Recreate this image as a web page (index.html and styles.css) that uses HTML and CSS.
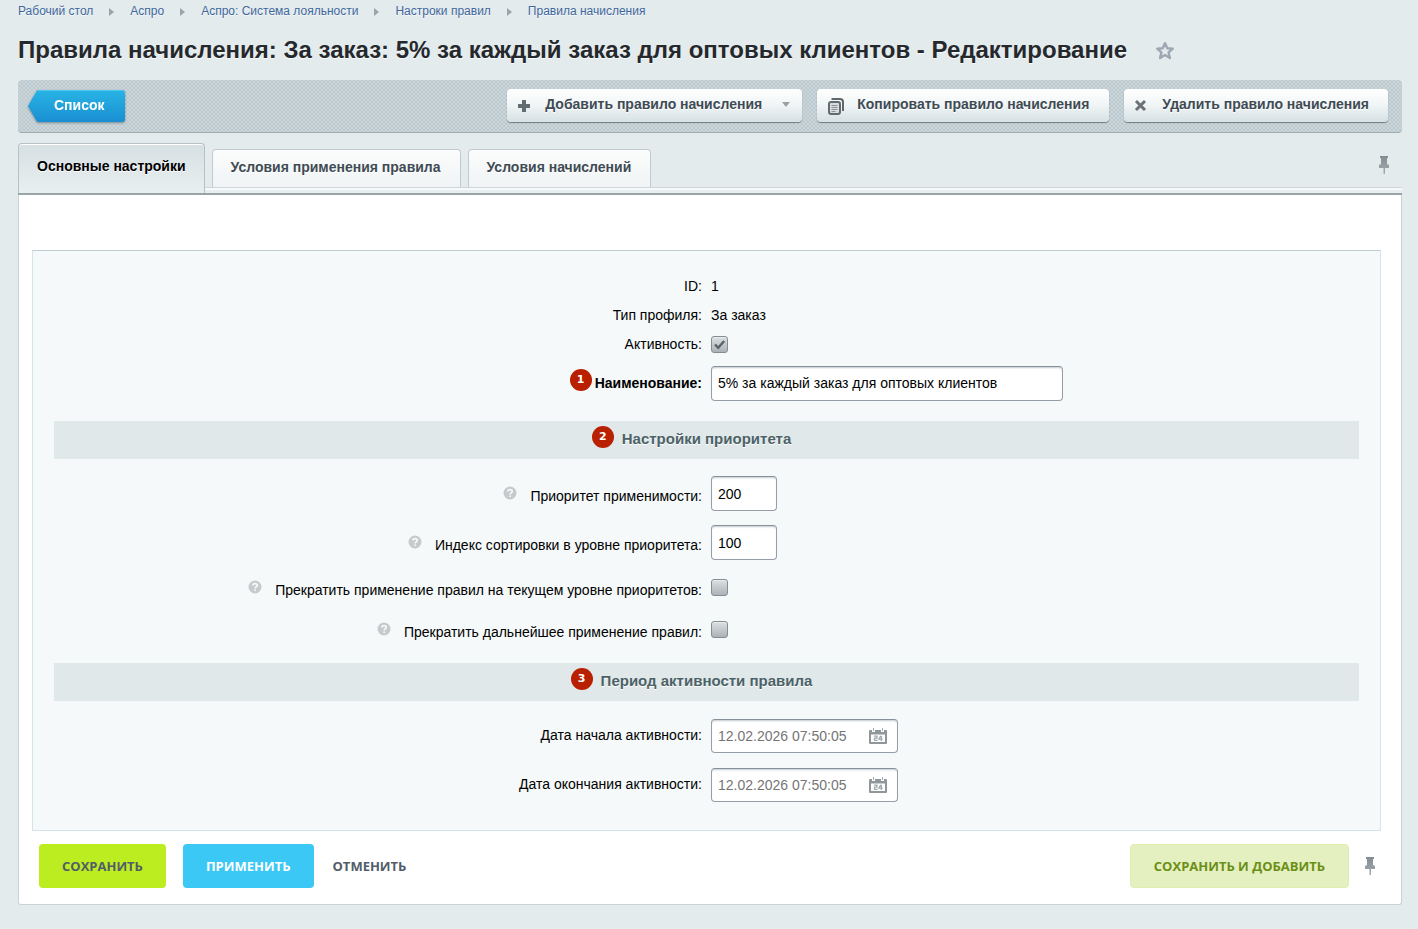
FILE: index.html
```html
<!DOCTYPE html>
<html lang="ru">
<head>
<meta charset="utf-8">
<title>Правила начисления - Редактирование</title>
<link rel="stylesheet" href="styles.css">
</head>
<body>
<svg class="sprite" aria-hidden="true">
  <defs>
    <linearGradient id="metal" x1="0" y1="0" x2="0" y2="1">
      <stop offset="0" stop-color="#838d91"/><stop offset="1" stop-color="#a3abaf"/>
    </linearGradient>
    <symbol id="pin" viewBox="0 0 12 20">
      <path fill="url(#metal)" d="M2 1h8v2H9v6l2 1v3H7v6H5.500v-6H1v-3l2-1V3H2z"/>
    </symbol>
    <symbol id="calendar" viewBox="0 0 18 16">
      <path fill="#90979b" fill-rule="evenodd" d="M1 2h2v2h3V2h6v2h3V2h2a1 1 0 0 1 1 1v12a1 1 0 0 1-1 1H1a1 1 0 0 1-1-1V3a1 1 0 0 1 1-1zm1 4v8h14V6z"/>
      <path fill="#a4abae" d="M4 0h1v3H4zM13 0h1v3h-1z"/>
      <path fill="none" stroke="#a3a9ac" stroke-width="1.300" d="M5 8.200h3v1.900H5.500v2.300h3.100M11.800 7.700l-1.900 3.400h3.800M12.400 7.700v5.300"/>
      <path fill="#90979b" d="M0 4h18v2.500H0z"/>
    </symbol>
    <symbol id="help" viewBox="0 0 14 14">
      <circle cx="7" cy="7" r="6.500" fill="#c6cacd"/>
      <path fill="none" stroke="#f5f9f9" stroke-width="1.700" d="M4.800 5.500C4.900 4.200 5.800 3.700 7 3.700c1.300 0 2.200.6 2.200 1.700 0 1.500-2.100 1.500-2.100 3.100M7.100 9.400v1.600"/>
    </symbol>
  </defs>
</svg>

<nav class="breadcrumbs" aria-label="Навигация">
  <a href="#">Рабочий стол</a><span class="crumb-arrow"></span>
  <a href="#">Аспро</a><span class="crumb-arrow"></span>
  <a href="#">Аспро: Система лояльности</a><span class="crumb-arrow"></span>
  <a href="#">Настроки правил</a><span class="crumb-arrow"></span>
  <a href="#">Правила начисления</a>
</nav>

<header class="page-title">
  <h1>Правила начисления: За заказ: 5% за каждый заказ для оптовых клиентов - Редактирование</h1>
  <button class="icon-button" type="button" aria-label="В избранное">
    <svg width="20" height="20" viewBox="0 0 20 20"><path fill="none" stroke="#9ea8b3" stroke-width="2.400" stroke-linejoin="round" d="M10 2.200l2.300 5 5.500.5-4.200 3.700 1.300 5.600-4.900-3-4.900 3 1.300-5.600-4.200-3.700 5.500-.5z"/></svg>
  </button>
</header>

<div class="toolbar">
  <a class="back" href="#"><svg class="back-arrow" viewBox="0 0 10 32" preserveAspectRatio="none" aria-hidden="true"><defs><linearGradient id="blue" x1="0" y1="0" x2="0" y2="1"><stop offset="0" stop-color="#28b4e5"/><stop offset="1" stop-color="#1a8fd2"/></linearGradient></defs><path fill="url(#blue)" d="M10 0v32Q9 32 8 30L0 16 8 2Q9 0 10 0z"/></svg><span class="back-text">Список</span></a>
  <div class="actions">
    <button class="action action-add" type="button">
      <svg width="14" height="14" viewBox="0 0 14 14"><path fill="#626d72" d="M5 1h4v4h4v4H9v4H5V9H1V5h4z"/></svg>
      <span>Добавить правило начисления</span>
      <span class="caret"></span>
    </button>
    <button class="action action-copy" type="button">
      <svg width="18" height="18" viewBox="0 0 18 18"><path fill="none" stroke="#5f686c" stroke-width="2" d="M4.500 2H13a3 3 0 0 1 3 3v9"/><rect x="2" y="5" width="11" height="12" rx="2" fill="#d7dcde" stroke="#626b6f" stroke-width="2"/><path stroke="#8d9498" d="M4.500 8.500h6M4.500 10.500h6M4.500 12.500h6M4.500 14.500h4"/></svg>
      <span>Копировать правило начисления</span>
    </button>
    <button class="action action-delete" type="button">
      <svg width="14" height="14" viewBox="0 0 14 14"><path stroke="#697277" stroke-width="3" d="M2 2l9 9M11 2l-9 9"/></svg>
      <span>Удалить правило начисления</span>
    </button>
  </div>
</div>

<div class="tabs" role="tablist">
  <button class="tab tab-active" type="button" role="tab" aria-selected="true">Основные настройки</button>
  <button class="tab" type="button" role="tab" aria-selected="false">Условия применения правила</button>
  <button class="tab" type="button" role="tab" aria-selected="false">Условия начислений</button>
  <button class="icon-button tabs-pin" type="button" aria-label="Закрепить вкладки"><svg width="12" height="20"><use href="#pin"/></svg></button>
</div>
<div class="strip"></div>

<form class="panel">
  <div class="fields">
    <div class="row row-text"><span class="label">ID:</span><span class="value">1</span></div>
    <div class="row row-text"><span class="label">Тип профиля:</span><span class="value">За заказ</span></div>
    <div class="row row-text">
      <label class="label" for="active">Активность:</label>
      <span class="check"><input type="checkbox" id="active" checked><svg viewBox="0 0 17 17"><path fill="none" stroke="#59626a" stroke-width="2.400" d="M4 8.500l3.200 3.300L13.200 5"/></svg></span>
    </div>
    <div class="row">
      <label class="label label-required" for="name"><span class="badge">1</span>Наименование:</label>
      <input class="text text-wide" type="text" id="name" value="5% за каждый заказ для оптовых клиентов">
    </div>

    <h2 class="section"><span class="section-title"><span class="badge badge-section">2</span>Настройки приоритета</span></h2>

    <div class="row">
      <label class="label label-hint" for="priority"><svg class="help"><use href="#help"/></svg><span>Приоритет применимости:</span></label>
      <input class="text text-short" type="text" id="priority" value="200">
    </div>
    <div class="row">
      <label class="label label-hint" for="sort"><svg class="help"><use href="#help"/></svg><span>Индекс сортировки в уровне приоритета:</span></label>
      <input class="text text-short" type="text" id="sort" value="100">
    </div>
    <div class="row row-check">
      <label class="label label-hint" for="stop-level"><svg class="help"><use href="#help"/></svg><span>Прекратить применение правил на текущем уровне приоритетов:</span></label>
      <span class="check"><input type="checkbox" id="stop-level"></span>
    </div>
    <div class="row row-check">
      <label class="label label-hint" for="stop-all"><svg class="help"><use href="#help"/></svg><span>Прекратить дальнейшее применение правил:</span></label>
      <span class="check"><input type="checkbox" id="stop-all"></span>
    </div>

    <h2 class="section"><span class="section-title"><span class="badge badge-section">3</span>Период активности правила</span></h2>

    <div class="row">
      <label class="label" for="from">Дата начала активности:</label>
      <span class="date"><input type="text" id="from" placeholder="12.02.2026 07:50:05"><button class="icon-button" type="button" aria-label="Выбрать дату начала"><svg width="18" height="16"><use href="#calendar"/></svg></button></span>
    </div>
    <div class="row">
      <label class="label" for="to">Дата окончания активности:</label>
      <span class="date"><input type="text" id="to" placeholder="12.02.2026 07:50:05"><button class="icon-button" type="button" aria-label="Выбрать дату окончания"><svg width="18" height="16"><use href="#calendar"/></svg></button></span>
    </div>
  </div>

  <div class="footer">
    <button class="btn btn-save" type="submit">СОХРАНИТЬ</button>
    <button class="btn btn-apply" type="button">ПРИМЕНИТЬ</button>
    <button class="btn btn-cancel" type="button">ОТМЕНИТЬ</button>
    <button class="btn btn-add" type="button">СОХРАНИТЬ И ДОБАВИТЬ</button>
    <button class="icon-button" type="button" aria-label="Закрепить панель"><svg width="12" height="20"><use href="#pin"/></svg></button>
  </div>
</form>
</body>
</html>
```
FILE: styles.css
```css
* { box-sizing: border-box; }

body {
  margin: 0;
  padding: 0 16px 24px 18px;
  min-height: 100vh;
  background: #e3ebed;
  color: #000;
  font: 14px/18px "Liberation Sans", Arial, sans-serif;
}

button, input { font: inherit; color: inherit; }
button { cursor: pointer; }
.sprite { position: absolute; width: 0; height: 0; }

.icon-button {
  display: flex;
  padding: 0;
  border: 0;
  background: none;
}

.breadcrumbs {
  display: flex;
  align-items: center;
  height: 22px;
  font-size: 12px;
}
.breadcrumbs a {
  color: #3f679c;
  text-decoration: none;
  text-shadow: 0 1px #f4f8f9;
}
.crumb-arrow {
  margin: 2px 16px 0;
  border: 4px solid transparent;
  border-left: 5px solid #9ba4a9;
  border-right: 0;
}

.page-title {
  display: flex;
  align-items: center;
  gap: 28px;
  height: 58px;
}
.page-title h1 {
  margin: 0;
  padding-bottom: 2px;
  font-size: 24px;
  line-height: 28px;
  color: #25282c;
  text-shadow: 0 1px #f8fbfb;
}

.toolbar {
  display: flex;
  align-items: center;
  justify-content: space-between;
  height: 53px;
  padding: 0 14px 1px 10px;
  border-bottom: 1px solid #9eabb1;
  border-radius: 4px;
  background-color: #cbd6da;
  background-image: radial-gradient(circle, #bcc9ce 1px, transparent 1px), radial-gradient(circle, #bcc9ce 1px, transparent 1px);
  background-size: 4px 4px;
  background-position: 0 0, 2px 2px;
}

.back {
  display: flex;
  height: 32px;
  color: #fff;
  font-weight: bold;
  text-decoration: none;
  filter: drop-shadow(0 1px 1px rgba(60, 80, 90, .55));
}
.back-arrow { width: 10px; height: 32px; }
.back-text {
  padding: 6px 20px 8px 16px;
  border-radius: 0 3px 3px 0;
  background: linear-gradient(#28b4e5, #1a8fd2);
  box-shadow: inset 0 1px #4cc6ef;
}

.actions { display: flex; gap: 15px; }
.action {
  display: flex;
  align-items: center;
  gap: 12px;
  height: 33px;
  padding: 0 17px 0 10px;
  border: 0;
  border-radius: 4px;
  background: linear-gradient(#fff, #f2f6f7 45%, #d6e1e4);
  box-shadow: 0 1px 1px #6f7b80;
  color: #3f4b54;
  font-weight: bold;
  text-shadow: 0 1px #fff;
}
.action span { padding-bottom: 3px; }
.action-add { gap: 14px; }
.action-copy { padding-right: 20px; }
.action-delete { gap: 14px; padding-right: 19px; }
.action .caret {
  margin: 0 -5px 2px 6px;
  padding: 0;
  border: 4px solid transparent;
  border-top: 5px solid #9aa0a3;
  border-bottom: 0;
}

.tabs {
  display: flex;
  align-items: flex-end;
  gap: 7px;
  height: 54px;
}
.tab {
  height: 38px;
  padding: 0 19px 3px 18px;
  border: 1px solid #c0cbcf;
  border-bottom: 0;
  border-radius: 4px 4px 0 0;
  background: linear-gradient(#fbfcfc, #f0f4f5);
  box-shadow: inset 0 1px #fff;
  color: #3f4b54;
  font-weight: bold;
  text-shadow: 0 1px #fff;
}
.tab-active {
  position: relative;
  height: 50px;
  margin-bottom: -6px;
  padding: 0 18px 5px;
  border-color: #b5c1c5;
  background: linear-gradient(#d6dfe2, #e8eff0);
  color: #000;
}
.tabs-pin { margin: 0 12px 12px auto; }

.strip {
  height: 8px;
  border: 1px solid #cdd7d9;
  border-width: 1px 0 2px;
  border-bottom-color: #98a4a6;
  background: #e8eff0;
  box-shadow: inset 0 2px #f6f9f9;
}

.panel {
  padding: 55px 20px 16px 13px;
  border: 1px solid #c8d4d6;
  border-top: 0;
  border-radius: 0 0 3px 3px;
  background: #fff;
}

.fields {
  padding: 21px;
  border: 1px solid #d5e3ea;
  border-top-color: #bfced3;
  background: #f5f9f9;
}
.row {
  display: grid;
  grid-template-columns: 1fr 1fr;
  column-gap: 9px;
  align-items: center;
  min-height: 49px;
}
.row-text { min-height: 29px; }
.row-check { min-height: 42px; }
.row-check > * { margin-bottom: 2px; }
.label { justify-self: end; }
.label, .value { padding-bottom: 2px; }
.label-required { position: relative; font-weight: bold; }
.label-hint { display: flex; gap: 13px; padding-bottom: 0; }
.label-hint span { padding-top: 5px; }
.help { width: 14px; height: 14px; margin-top: 4px; }

.badge {
  position: absolute;
  right: calc(100% + 3px);
  top: -5px;
  width: 22px;
  height: 22px;
  border-radius: 50%;
  background: #b92000;
  color: #fff;
  font: bold 11px/22px "DejaVu Sans", sans-serif;
  text-align: center;
  text-shadow: none;
}
.badge-section { right: calc(100% + 8px); top: -4px; }

.section {
  margin: 13px 0 10px;
  padding: 9px 0 11px;
  background: #e0e8ea;
  color: #4b6267;
  font-size: 15px;
  line-height: 18px;
  text-align: center;
  text-shadow: 0 1px #fff;
}
.row-check + .section { margin-top: 12px; }
.section-title { position: relative; display: inline-block; }

.text, .date {
  height: 35px;
  border: 1px solid #959da9;
  border-top-color: #87919c;
  border-radius: 4px;
  background: #fff;
  box-shadow: inset 0 2px 2px -1px #c3cbd0;
}
.text { padding: 0 6px; }
.text-wide { width: 352px; padding-bottom: 2px; }
.text-short { width: 66px; }

.date {
  display: flex;
  align-items: center;
  justify-content: space-between;
  width: 187px;
  height: 34px;
  padding: 0 10px 0 6px;
}
.date input {
  width: 140px;
  padding: 0;
  border: 0;
  background: none;
}
.date input::placeholder { color: #757575; opacity: 1; }

.check { display: grid; width: 17px; height: 17px; }
.check input, .check svg { grid-area: 1 / 1; }
.check svg { pointer-events: none; }
.check input {
  appearance: none;
  width: 17px;
  height: 17px;
  margin: 0;
  border: 1px solid #858d91;
  border-radius: 3px;
  background: linear-gradient(#dce0e3, #acb2b7);
  box-shadow: inset 0 1px #e9eced;
}

.footer {
  display: flex;
  align-items: center;
  padding: 13px 5px 0 7px;
}
.btn {
  height: 44px;
  padding: 0 23px;
  border: 0;
  border-radius: 4px;
  color: #535c69;
  font: bold 13px/20px "Open Sans", sans-serif;
}
.btn-save { background: #bbed21; }
.btn-apply { margin-left: 17px; background: #3bc8f5; color: #fff; }
.btn-cancel { padding: 0 19px; background: none; }
.btn-add {
  margin: 0 15px 0 auto;
  border: 1px solid #dfedb0;
  background: #e4f0c0;
  color: #6b8f14;
}
```
